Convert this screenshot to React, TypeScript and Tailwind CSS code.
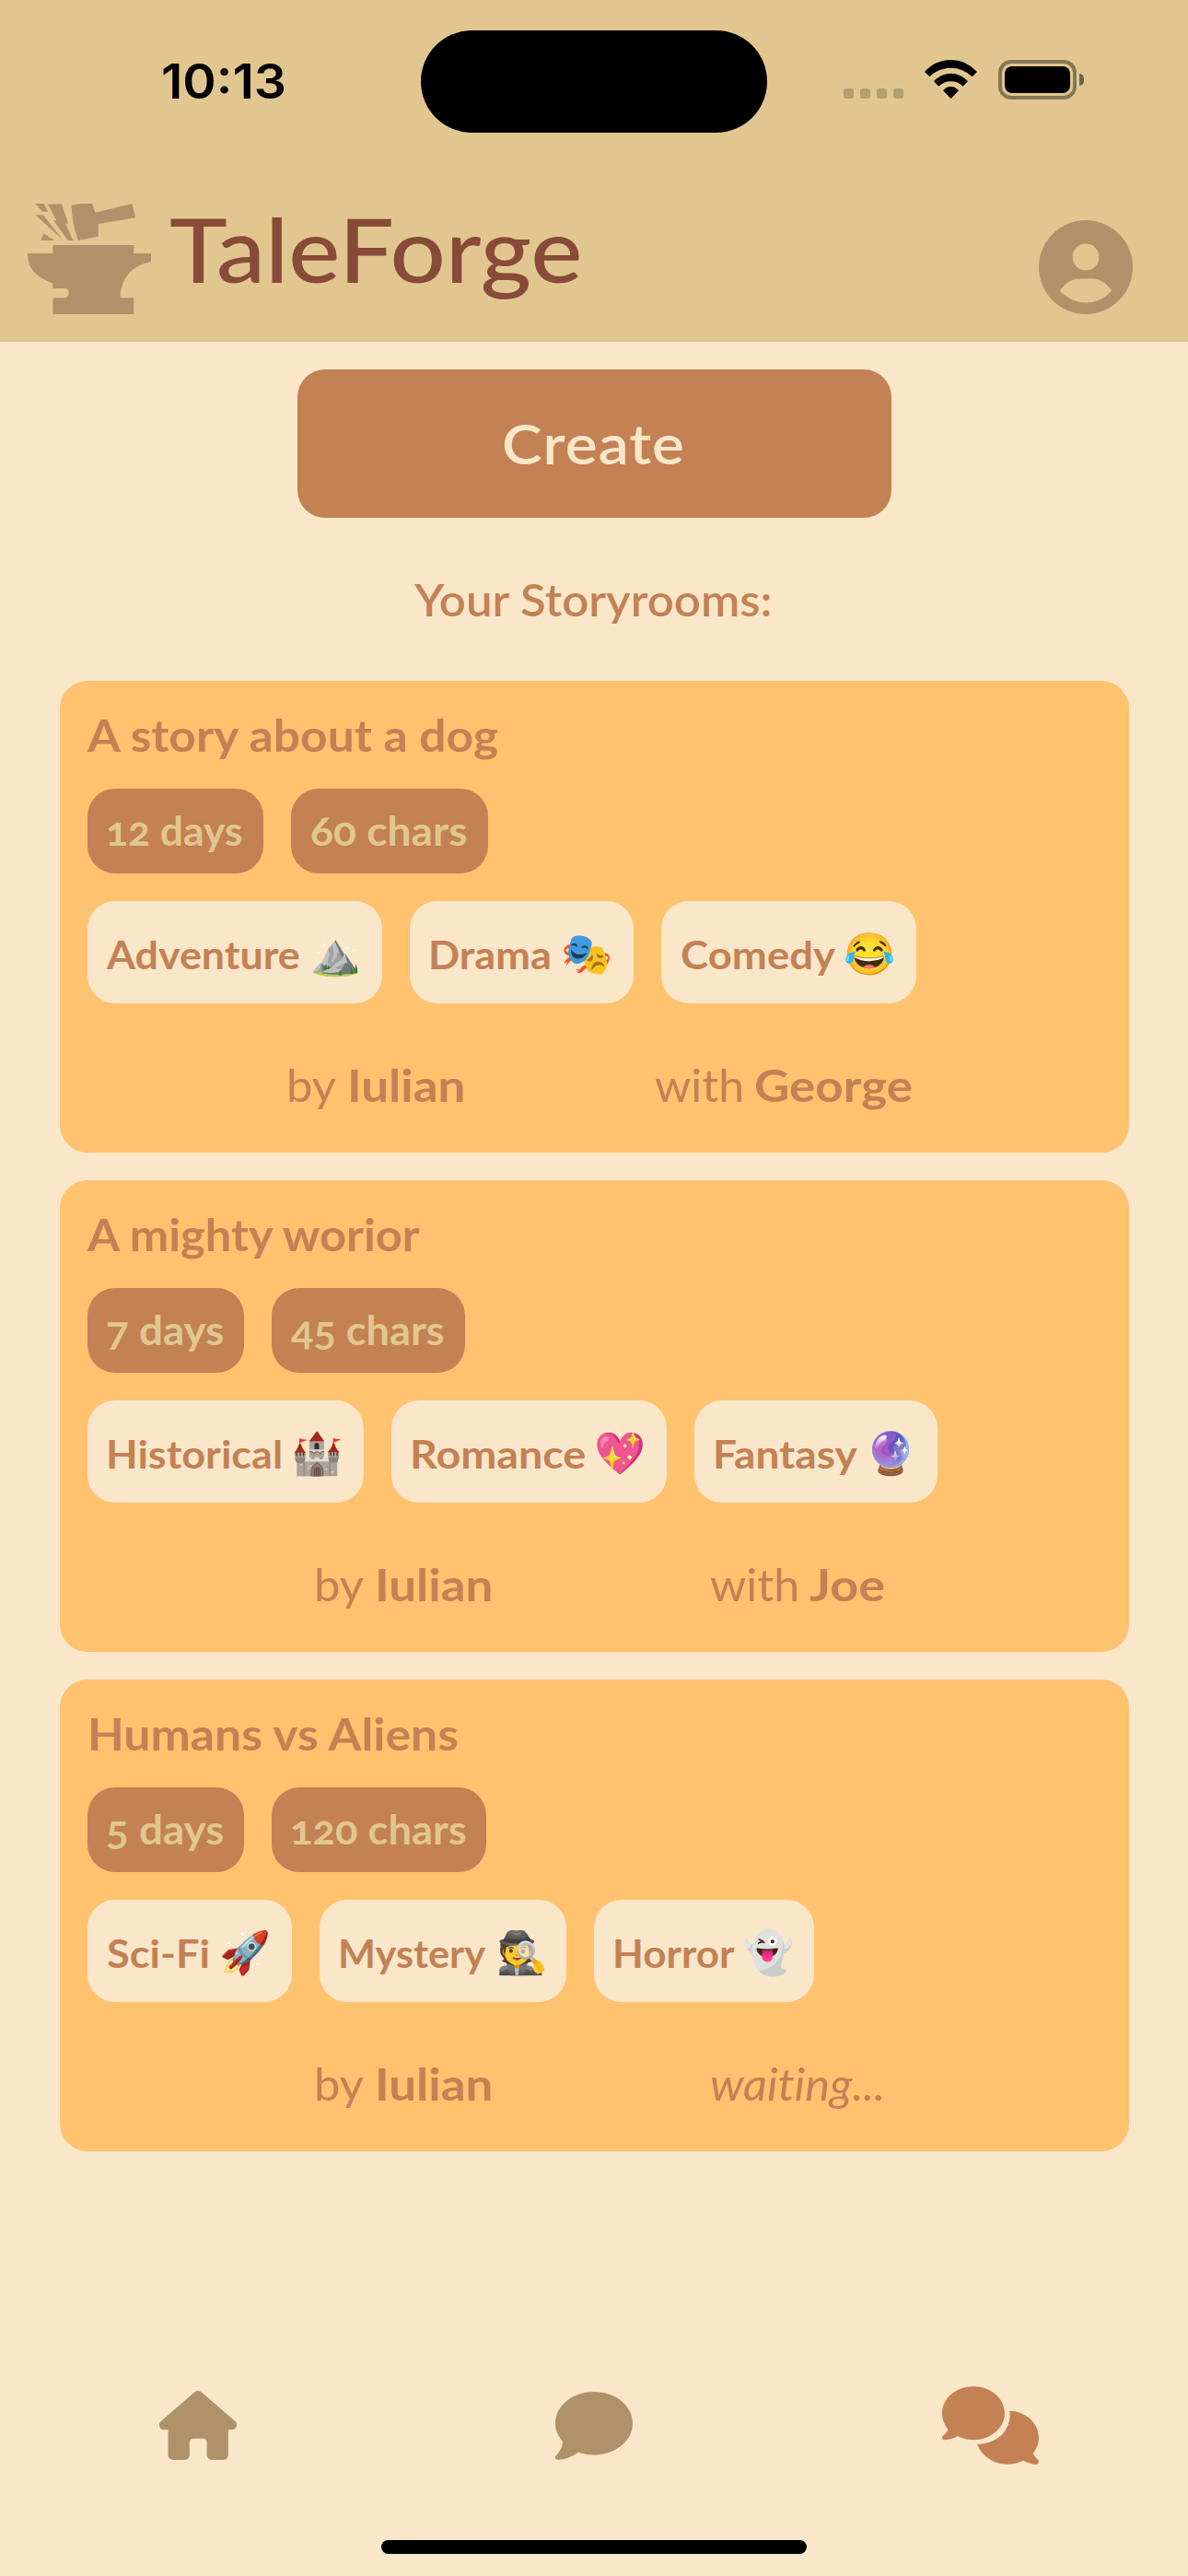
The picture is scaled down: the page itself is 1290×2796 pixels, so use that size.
import { useLayoutEffect, useRef, useState, type ReactNode } from "react";

/** Text stretched horizontally so that it fills the given width. */
function Fit({ w, className = "", children }: { w: number; className?: string; children: ReactNode }) {
  const ref = useRef<HTMLSpanElement>(null);
  const [stretch, setStretch] = useState(1);
  useLayoutEffect(() => {
    if (ref.current) setStretch(w / ref.current.offsetWidth);
  }, [w]);
  return (
    <span className={`block shrink-0 whitespace-nowrap ${className}`} style={{ width: w }}>
      <span ref={ref} className="inline-block origin-left" style={{ transform: `scaleX(${stretch})` }}>
        {children}
      </span>
    </span>
  );
}

type Chip = { label: string; w: number; pad: number; textW: number };
type Tag = Chip & { emoji: string; gap: number };
type Room = {
  title: string;
  titleW: number;
  stats: Chip[];
  tags: Tag[];
  partner?: { name: string; w: number };
  wide?: boolean;
};

const rooms: Room[] = [
  {
    title: "A story about a dog",
    titleW: 446,
    stats: [
      { label: "12 days", w: 191, pad: 20, textW: 149 },
      { label: "60 chars", w: 214, pad: 21, textW: 171 },
    ],
    tags: [
      { label: "Adventure", emoji: "⛰️", w: 320, pad: 21, textW: 210, gap: 10 },
      { label: "Drama", emoji: "🎭", w: 243, pad: 20, textW: 134, gap: 10 },
      { label: "Comedy", emoji: "😂", w: 277, pad: 21, textW: 168, gap: 9 },
    ],
    partner: { name: "George", w: 172 },
    wide: true,
  },
  {
    title: "A mighty worior",
    titleW: 361,
    stats: [
      { label: "7 days", w: 170, pad: 20, textW: 128 },
      { label: "45 chars", w: 210, pad: 21, textW: 167 },
    ],
    tags: [
      { label: "Historical", emoji: "🏰", w: 300, pad: 20, textW: 192, gap: 9 },
      { label: "Romance", emoji: "💖", w: 299, pad: 20, textW: 191, gap: 9 },
      { label: "Fantasy", emoji: "🔮", w: 264, pad: 20, textW: 157, gap: 8 },
    ],
    partner: { name: "Joe", w: 82 },
  },
  {
    title: "Humans vs Aliens",
    titleW: 403,
    stats: [
      { label: "5 days", w: 170, pad: 20, textW: 128 },
      { label: "120 chars", w: 233, pad: 20, textW: 192 },
    ],
    tags: [
      { label: "Sci-Fi", emoji: "🚀", w: 222, pad: 21, textW: 112, gap: 10 },
      { label: "Mystery", emoji: "🕵️", w: 268, pad: 20, textW: 160, gap: 12 },
      { label: "Horror", emoji: "👻", w: 239, pad: 20, textW: 132, gap: 9 },
    ],
  },
];

function StatusBar() {
  return (
    <div className="flex h-[177px] items-start">
      <div className="w-[457px] pl-[175px] pt-[57px]">
        <Fit w={136} className="font-['Inter'] text-[52px] leading-[64px] font-semibold text-black">
          10:13
        </Fit>
      </div>
      <div className="mt-[33px] h-[111px] w-[376px] rounded-full bg-black" />
      <div className="ml-[83px] mt-[96px] flex gap-[7px]">
        {[0, 1, 2, 3].map((i) => (
          <div key={i} className="size-[11px] rounded-[3px] bg-black/20" />
        ))}
      </div>
      <svg viewBox="432 195 171 126" className="ml-[23px] mt-[65px] h-[42px] w-[57px]">
        <path d="M432 234Q468 195 517.500 195Q567 195 603 234L587 250Q557 221 517.500 221Q478 221 448 250Z" />
        <path d="M462 265Q485 239 517.500 239Q550 239 573 265L557 281Q540 265 517.500 265Q495 265 478 281Z" />
        <path d="M492 295Q503 282 517.500 282Q532 282 543 295L517.500 321Z" />
      </svg>
      <div className="ml-[23px] mt-[65px] h-[43px] w-[85px] rounded-[14px] border-4 border-black/40 p-[3px]">
        <div className="h-full w-full rounded-[8px] bg-black" />
      </div>
      <div className="ml-[3px] mt-[80px] h-[13px] w-[5px] rounded-r-full bg-black/50" />
    </div>
  );
}

function AnvilLogo() {
  return (
    <svg viewBox="20 33 400 360" preserveAspectRatio="none" className="h-[120px] w-[134px] fill-[#b0926a]">
      <path d="M20 195H102V168H364V195H420V223C350 235 322 285 320 340H364V393H102V340H143C157 332 157 315 145 309H102V293C45 270 20 245 20 195Z" />
      <path d="M162 38Q195 30 230 33L239 62L358 33L370 79L249 99V140L184 153Q163 95 162 38Z" />
      <path d="M45 33H73L86 59H68Z" />
      <path d="M86 35L130 34L152 98H142L168 153H150L103 86L113 88Z" />
      <path d="M45 70H70L134 150Z" />
      <path d="M72 130L107 153H62Z" />
    </svg>
  );
}

function AccountIcon() {
  return (
    <svg viewBox="0 0 102 102" className="size-[102px]">
      <circle cx="51" cy="51" r="51" className="fill-[#b0926a]" />
      <circle cx="51" cy="40" r="14.400" className="fill-[#e1c78f]" />
      <path
        d="M22.700 76.700C28 69 35 63.500 44 63.500H58C67 63.500 74 69 79.300 76.700Q67 89.500 51 89.500Q35 89.500 22.700 76.700Z"
        className="fill-[#e1c78f]"
      />
    </svg>
  );
}

function RoomCard({ room }: { room: Room }) {
  return (
    <section className="h-[512px] w-[1161px] rounded-[30px] bg-[#ffc26f] pl-[30px] text-[#c38154]">
      <h2 className="h-[117px] pt-[27px]">
        <Fit w={room.titleW} className="text-[48px] leading-[64px] font-bold">
          {room.title}
        </Fit>
      </h2>
      <div className="flex gap-[30px]">
        {room.stats.map((s) => (
          <div
            key={s.label}
            className="flex h-[92px] items-center rounded-[30px] bg-[#c38154] text-[#e1c78f]"
            style={{ width: s.w, paddingLeft: s.pad }}
          >
            <Fit w={s.textW} className="text-[43px] leading-[60px] font-bold oldstyle-nums">
              {s.label}
            </Fit>
          </div>
        ))}
      </div>
      <div className="mt-[30px] flex gap-[30px]">
        {room.tags.map((t) => (
          <div
            key={t.label}
            className="flex h-[111px] items-center rounded-[30px] bg-[#fae7c9] pt-1"
            style={{ width: t.w, paddingLeft: t.pad, gap: t.gap }}
          >
            <Fit w={t.textW} className="text-[42px] leading-[60px] font-bold">
              {t.label}
            </Fit>
            <span className="pb-1 text-[45px] leading-[60px]">{t.emoji}</span>
          </div>
        ))}
      </div>
      <div
        className={`mt-[59px] flex text-[48px] leading-[60px] ${room.wide ? "gap-[206px] pl-[216px]" : "gap-[236px] pl-[246px]"}`}
      >
        <div className="flex gap-[12px]">
          <Fit w={54}>by</Fit>
          <Fit w={128} className="font-bold">
            Iulian
          </Fit>
        </div>
        {room.partner ? (
          <div className="flex gap-[11px]">
            <Fit w={97}>with</Fit>
            <Fit w={room.partner.w} className="font-bold">
              {room.partner.name}
            </Fit>
          </div>
        ) : (
          <Fit w={190} className="italic [font-variant-ligatures:none]">
            waiting...
          </Fit>
        )}
      </div>
    </section>
  );
}

function TabBar() {
  return (
    <nav className="mt-[255px] flex h-[85px] items-start pl-[173px]">
      <svg viewBox="112 106 220 225" preserveAspectRatio="none" className="mt-[5px] h-[75px] w-[84px] fill-[#b0926a]">
        <path d="M211 111Q222 101 233 111L328 206Q333 211 332 219Q330 233 317 233H308V316Q306 331 292 331H262Q248 329 247 316V272Q246 261 234 261H210Q199 262 198 272V316Q196 331 182 331H152Q138 329 137 316V233H126Q113 232 112 219Q111 211 116 206Z" />
      </svg>
      <svg viewBox="1236 108 220 222" preserveAspectRatio="none" className="ml-[346px] mt-[6px] h-[74px] w-[84px] fill-[#b0926a]">
        <path d="M1346 108C1407 108 1456 154 1456 211C1456 268 1407 314 1346 314Q1323 314 1302 305Q1272 328 1245 330Q1232 329 1237 317Q1256 296 1257 270C1243 252 1236 232 1236 211C1236 154 1285 108 1346 108Z" />
      </svg>
      <svg viewBox="189 90 315 255" className="ml-[336px] h-[85px] w-[105px] fill-[#c38154]">
        <path d="M291 91C347 91 393 130 393 178C393 226 347 265 291 265Q265 265 240 253Q217 265 196 265Q186 262 190 253Q205 241 208 231C195 214 189 197 189 178C189 130 235 91 291 91Z" />
        <path d="M409 170C462 172 504 210 504 258Q504 286 485 308Q489 319 503 331Q506 343 496 345Q476 344 454 332Q429 344 400 344C357 344 318 317 303 279C368 279 417 232 409 170Z" />
      </svg>
    </nav>
  );
}

export default function App() {
  return (
    <div className="flex h-[2796px] w-[1290px] flex-col overflow-hidden bg-[#fae7c9] font-['Lato',sans-serif]">
      <header className="h-[371px] bg-[#e1c78f]">
        <StatusBar />
        <div className="flex pl-[30px]">
          <div className="mt-[44px]">
            <AnvilLogo />
          </div>
          <h1 className="ml-[20px] mt-[33px]">
            <Fit w={449} className="text-[96px] leading-[120px] font-medium text-[#884a39]">
              TaleForge
            </Fit>
          </h1>
          <div className="ml-auto mr-[60px] mt-[62px]">
            <AccountIcon />
          </div>
        </div>
      </header>
      <main className="flex flex-col items-center">
        <button className="mt-[30px] flex h-[161px] w-[645px] items-center justify-center rounded-[30px] bg-[#c38154] pb-0.5 pr-0.5 text-[#fae7c9]">
          <Fit w={199} className="text-left text-[60px] leading-[80px] font-semibold tracking-[1px]">
            Create
          </Fit>
        </button>
        <div className="mt-[59px] flex h-[118px] pr-0.5 text-[#c38154]">
          <Fit w={389} className="text-[48px] leading-[60px] font-semibold">
            Your Storyrooms:
          </Fit>
        </div>
        <div className="flex flex-col gap-[30px]">
          {rooms.map((r) => (
            <RoomCard key={r.title} room={r} />
          ))}
        </div>
      </main>
      <TabBar />
      <div className="mt-[82px] ml-[414px] h-[15px] w-[462px] rounded-full bg-black" />
    </div>
  );
}
